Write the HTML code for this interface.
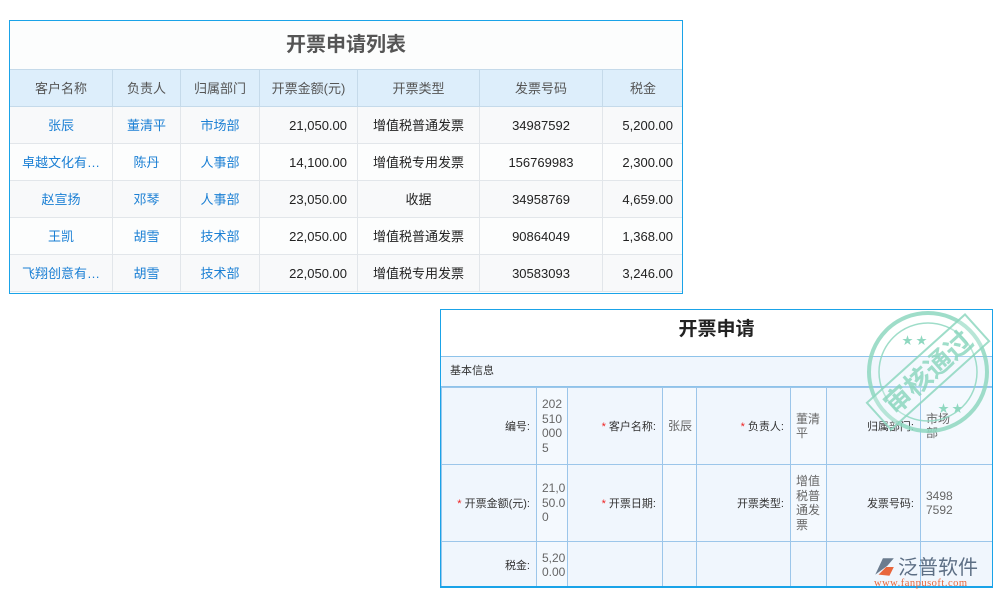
<!DOCTYPE html>
<html><head><meta charset="utf-8"><style>
*{margin:0;padding:0;box-sizing:border-box}
body{width:1000px;height:600px;background:#fff;font-family:"Liberation Sans","Noto Sans CJK SC",sans-serif;position:relative;overflow:hidden}
.box1{position:absolute;left:9px;top:20px;width:674px;height:274px;border:1px solid #1aa3e8;background:#fcfdfd;overflow:hidden}
.t1{height:48px;text-align:center;line-height:48px;font-size:20px;font-weight:bold;color:#555}
table{border-collapse:collapse;table-layout:fixed}
.tb td{height:37px;font-size:13px;border:1px solid #e2e6ea;text-align:center;color:#222;padding:0;line-height:15px}
.tb tr.h td{background:#ddeefb;color:#555;border-color:#c5daea}
.tb td.l{color:#1a7fd4}
.tb td.r{text-align:right;padding-right:10px}
.tb tr:nth-child(even) td{background:#f8f9fa}
.tb tr.h td{background:#ddeefb}
.box2{position:absolute;left:440px;top:309px;width:553px;height:279px;border:1px solid #1aa3e8;border-bottom:2px solid #1aa3e8;background:#fff;overflow:hidden}
.t2{height:46px;text-align:center;line-height:40px;font-size:19px;font-weight:bold;color:#222}
.sec{height:31px;background:#f0f6fd;border-top:1px solid #8ec3ea;border-bottom:1px solid #8ec3ea;font-size:11px;line-height:29px;padding-left:9px;color:#333}
.fb td{border:1px solid #9cc6ea;font-size:11px;color:#333;background:#f0f6fd;vertical-align:middle}
.fb td.lb{text-align:right;padding-right:6px}
.fb td.v{color:#666;padding:0 0 0 5px;font-size:12px;line-height:14.5px;white-space:nowrap;background:#f4f9fe;overflow:hidden}
.st{color:#e22}
</style></head><body>
<div class="box1">
<div class="t1">开票申请列表</div>
<table class="tb" style="width:674px;margin-left:-1px">
<colgroup><col style="width:103px"><col style="width:68px"><col style="width:79px"><col style="width:98px"><col style="width:122px"><col style="width:123px"><col style="width:81px"></colgroup>
<tr class="h"><td>客户名称</td><td>负责人</td><td>归属部门</td><td>开票金额(元)</td><td>开票类型</td><td>发票号码</td><td>税金</td></tr>
<tr><td class="l">张辰</td><td class="l">董清平</td><td class="l">市场部</td><td class="r">21,050.00</td><td>增值税普通发票</td><td>34987592</td><td class="r">5,200.00</td></tr>
<tr><td class="l">卓越文化有…</td><td class="l">陈丹</td><td class="l">人事部</td><td class="r">14,100.00</td><td>增值税专用发票</td><td>156769983</td><td class="r">2,300.00</td></tr>
<tr><td class="l">赵宣扬</td><td class="l">邓琴</td><td class="l">人事部</td><td class="r">23,050.00</td><td>收据</td><td>34958769</td><td class="r">4,659.00</td></tr>
<tr><td class="l">王凯</td><td class="l">胡雪</td><td class="l">技术部</td><td class="r">22,050.00</td><td>增值税普通发票</td><td>90864049</td><td class="r">1,368.00</td></tr>
<tr><td class="l">飞翔创意有…</td><td class="l">胡雪</td><td class="l">技术部</td><td class="r">22,050.00</td><td>增值税专用发票</td><td>30583093</td><td class="r">3,246.00</td></tr>
</table>
</div>
<div class="box2">
<div class="t2">开票申请</div>
<div class="sec">基本信息</div>
<table class="fb" style="width:551px">
<colgroup><col style="width:95px"><col style="width:31px"><col style="width:95px"><col style="width:34px"><col style="width:94px"><col style="width:36px"><col style="width:94px"><col style="width:72px"></colgroup>
<tr style="height:77px"><td class="lb">编号:</td><td class="v">202<br>510<br>000<br>5</td><td class="lb"><span class="st">*</span> 客户名称:</td><td class="v">张辰</td><td class="lb"><span class="st">*</span> 负责人:</td><td class="v">董清<br>平</td><td class="lb">归属部门:</td><td class="v">市场<br>部</td></tr>
<tr style="height:77px"><td class="lb"><span class="st">*</span> 开票金额(元):</td><td class="v">21,0<br>50.0<br>0</td><td class="lb"><span class="st">*</span> 开票日期:</td><td class="v"></td><td class="lb">开票类型:</td><td class="v">增值<br>税普<br>通发<br>票</td><td class="lb">发票号码:</td><td class="v">3498<br>7592</td></tr>
<tr style="height:47px"><td class="lb">税金:</td><td class="v">5,20<br>0.00</td><td></td><td></td><td></td><td></td><td></td><td></td></tr>
</table>
</div>
<svg style="position:absolute;left:864px;top:308px" width="130" height="130" viewBox="0 0 130 130">
<g fill="none" stroke="#8fd8c0" opacity="0.85">
<circle cx="64" cy="64" r="59" stroke-width="4"/>
<circle cx="64" cy="64" r="49" stroke-width="1.5"/>
</g>
<g transform="rotate(-42 64 64)" opacity="0.85">
<rect x="-2" y="46" width="132" height="36" fill="#fff" fill-opacity="0.3" stroke="#8fd8c0" stroke-width="2"/>
<text x="64" y="74" text-anchor="middle" font-size="27" font-weight="bold" fill="#8fd8c0" font-family="Noto Sans CJK SC,sans-serif">审核通过</text>
</g>
<text x="38" y="36" font-size="11" fill="#8fd8c0">★ ★</text>
<text x="74" y="104" font-size="11" fill="#8fd8c0">★ ★</text>
</svg>
<div style="position:absolute;left:872px;top:552px;width:120px;height:38px">
<svg style="position:absolute;left:0;top:3px" width="24" height="24" viewBox="0 0 22 22"><path d="M3 18 L10 3 L20 3 L14 10 Z" fill="#6b7c8f"/><path d="M6 18 L13 11 L20 11 L16 19 Z" fill="#e8663c"/></svg>
<div style="position:absolute;left:26px;top:-1px;font-size:20px;color:#5d6f85;font-family:'Noto Sans CJK SC',sans-serif">泛普软件</div>
<div style="position:absolute;left:2px;top:26px;font-size:10.5px;color:#e8663c;font-family:'Liberation Serif',serif;letter-spacing:0.5px">www.fanpusoft.com</div>
</div>
</body></html>
